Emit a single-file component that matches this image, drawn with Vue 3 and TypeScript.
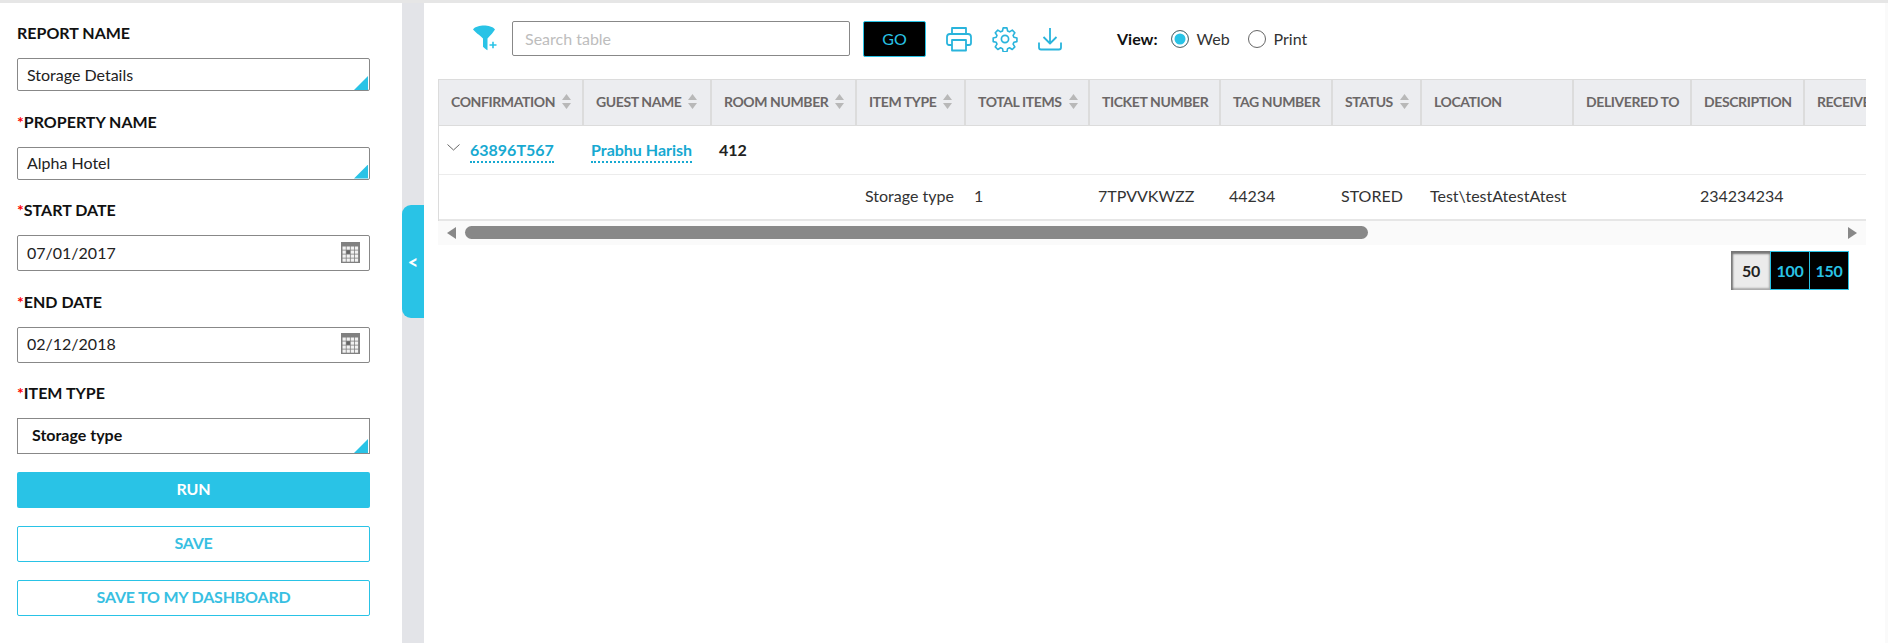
<template>
  <div class="page">
    <aside class="sidebar">
      <form class="report-form" @submit.prevent>
        <template v-for="field in fields" :key="field.label">
          <label class="field-label">
            <span v-if="field.required" class="req">*</span>{{ field.label }}
          </label>
          <div class="field" :class="field.kind">
            <span class="field-value">{{ field.value }}</span>
            <svg v-if="field.kind === 'date'" class="cal" viewBox="0 0 19 21" width="19" height="21">
              <rect width="19" height="21" fill="#808080" />
              <g>
                <template v-for="r in 4" :key="r">
                  <rect
                    v-for="c in 4"
                    :key="c"
                    :x="1.5 + (c - 1) * 4.1"
                    :y="4.5 + (r - 1) * 4"
                    width="3.3"
                    height="3.2"
                    :fill="r === 2 && c === 2 ? '#666' : '#f2f2f2'"
                  />
                </template>
              </g>
            </svg>
          </div>
        </template>
        <button class="btn run" type="button">RUN</button>
        <button class="btn outline" type="button">SAVE</button>
        <button class="btn outline" type="button">SAVE TO MY DASHBOARD</button>
      </form>
    </aside>

    <div class="gutter">
      <button class="collapse" type="button">&lt;</button>
    </div>

    <main class="content">
      <div class="toolbar">
        <svg class="filter-icon" viewBox="0 0 25 28" width="25" height="28">
          <path d="M1 4.500C3 1.500 8 .5 12 .5s9 1 11 4c-1.200 2-4.500 6-7.500 9v11.800c-1-.4-3.400-2.200-4.500-3.500V13.500C8 10.500 2.500 6.500 1 4.500Z" fill="#29c3e6" />
          <path d="M17.500 20h7M21 16.800v6.500" stroke="#29c3e6" stroke-width="1.600" />
        </svg>
        <input class="search" type="text" placeholder="Search table" />
        <button class="go" type="button">GO</button>
        <div class="tools">
          <svg viewBox="0 0 26 26" width="26" height="26" fill="none" stroke="#29b4dc" stroke-width="1.800" stroke-linejoin="round">
            <path d="M6 8V2h14v6" />
            <path d="M6 19H3a2 2 0 0 1-2-2v-6a3 3 0 0 1 3-3h18a3 3 0 0 1 3 3v6a2 2 0 0 1-2 2h-3" />
            <rect x="6" y="14" width="14" height="10.500" />
          </svg>
          <svg viewBox="0 0 26 26" width="26" height="26" fill="none" stroke="#29b4dc" stroke-width="1.700" stroke-linejoin="round">
            <circle cx="13" cy="13" r="3.600" />
            <path d="M11 1.500h4l.7 3.300 2 .9 2.900-1.800 2.700 2.800-1.800 2.800.8 2 3.200.7v3.800l-3.200.7-.8 2 1.800 2.800-2.700 2.800-2.900-1.800-2 .9-.7 3.300h-4l-.7-3.300-2-.9-2.900 1.800-2.700-2.800 1.800-2.800-.8-2-3.200-.7v-3.800l3.200-.7.800-2-1.800-2.800 2.700-2.800 2.900 1.800 2-.9Z" transform="translate(.7 .4) scale(.95)" />
          </svg>
          <svg viewBox="0 0 24 24" width="24" height="24" fill="none" stroke="#29b4dc" stroke-width="1.800" stroke-linejoin="round">
            <path d="M12 1v15M5.500 10l6.500 6.500 6.500-6.500" />
            <path d="M1 15.500v5a2 2 0 0 0 2 2h18a2 2 0 0 0 2-2v-5" />
          </svg>
        </div>
        <div class="view">
          <strong>View:</strong>
          <label class="radio"><input type="radio" name="view" checked />Web</label>
          <label class="radio"><input type="radio" name="view" />Print</label>
        </div>
      </div>

      <div class="table-wrap">
        <table class="grid">
          <colgroup>
            <col v-for="col in columns" :key="col.title" :style="{ width: col.width + 'px' }" />
          </colgroup>
          <thead>
            <tr>
              <th v-for="col in columns" :key="col.title">
                <span class="th-inner">
                  {{ col.title }}
                  <svg v-if="col.sort" class="sort" viewBox="0 0 9 15" width="9" height="15">
                    <path d="M4.500 0 9 6H0Z M0 9h9l-4.500 6Z" fill="#b8b8b8" />
                  </svg>
                </span>
              </th>
            </tr>
          </thead>
          <tbody>
            <tr class="group-row">
              <td class="first">
                <svg class="chev" viewBox="0 0 13 7" width="13" height="7" fill="none" stroke="#666" stroke-width="1">
                  <path d="M.5.5l6 5.500 6-5.500" />
                </svg>
                <a class="link">63896T567</a>
              </td>
              <td><a class="link">Prabhu Harish</a></td>
              <td class="room">412</td>
              <td :colspan="columns.length - 3"></td>
            </tr>
            <tr class="detail-row">
              <td v-for="(cell, i) in detailCells" :key="i">{{ cell }}</td>
            </tr>
          </tbody>
        </table>
      </div>
      <div class="hscroll">
        <span class="arrow left"></span>
        <div class="track"><div class="thumb"></div></div>
        <span class="arrow right"></span>
      </div>

      <div class="pager">
        <button v-for="size in pageSizes" :key="size" type="button" :class="{ active: size === pageSize }">{{ size }}</button>
      </div>
    </main>
    <div class="edge"></div>
  </div>
</template>

<script setup lang="ts">
import { ref } from 'vue';

interface Field {
  label: string;
  value: string;
  kind: 'select' | 'date' | 'select tall';
  required: boolean;
}

const fields: Field[] = [
  { label: 'REPORT NAME', value: 'Storage Details', kind: 'select', required: false },
  { label: 'PROPERTY NAME', value: 'Alpha Hotel', kind: 'select', required: true },
  { label: 'START DATE', value: '07/01/2017', kind: 'date', required: true },
  { label: 'END DATE', value: '02/12/2018', kind: 'date', required: true },
  { label: 'ITEM TYPE', value: 'Storage type', kind: 'select tall', required: true },
];

const columns = [
  { title: 'CONFIRMATION', width: 145, sort: true },
  { title: 'GUEST NAME', width: 128, sort: true },
  { title: 'ROOM NUMBER', width: 145, sort: true },
  { title: 'ITEM TYPE', width: 109, sort: true },
  { title: 'TOTAL ITEMS', width: 124, sort: true },
  { title: 'TICKET NUMBER', width: 131, sort: false },
  { title: 'TAG NUMBER', width: 112, sort: false },
  { title: 'STATUS', width: 89, sort: true },
  { title: 'LOCATION', width: 152, sort: false },
  { title: 'DELIVERED TO', width: 118, sort: false },
  { title: 'DESCRIPTION', width: 113, sort: false },
  { title: 'RECEIVED BY', width: 130, sort: false },
];

const detailCells = ['', '', '', 'Storage type', '1', '7TPVVKWZZ', '44234', 'STORED', 'Test\\testAtestAtest', '', '234234234', ''];

const pageSizes = [50, 100, 150];
const pageSize = ref(50);
</script>

<style>
html, body {
  background: #fff;
}
</style>

<style scoped>
.page {
  display: flex;
  width: 1888px;
  height: 643px;
  box-sizing: border-box;
  border-top: 3px solid #e6e6e6;
  overflow: hidden;
  font-family: Lato, "Open Sans", sans-serif;
  color: #222;
}
.sidebar {
  width: 402px;
  flex: none;
  box-sizing: border-box;
  padding: 0 32px 0 17px;
}
.report-form {
  display: flex;
  flex-direction: column;
}
.field-label {
  display: block;
  height: 20px;
  line-height: 20px;
  margin-top: 20.5px;
  margin-bottom: 15px;
  font-size: 16px;
  font-weight: 700;
  color: #111;
}
.field-label:first-child {
  margin-top: 20px;
}
.req {
  color: #f00;
}
.field {
  position: relative;
  box-sizing: border-box;
  height: 33px;
  border: 1px solid #888;
  border-radius: 2px;
  padding: 0 9px 1px;
  display: flex;
  align-items: center;
  justify-content: space-between;
  font-size: 16px;
  color: #222;
}
.field.select::after {
  content: "";
  position: absolute;
  right: 1px;
  bottom: 0;
  width: 14px;
  height: 14px;
  background: #29c3e6;
  clip-path: polygon(100% 0, 100% 100%, 0 100%);
}
.field.date {
  height: 36px;
  padding-bottom: 2px;
}
.field.tall {
  height: 36px;
  border-radius: 0;
  padding-left: 14px;
  padding-bottom: 3px;
  font-weight: 700;
  color: #111;
}
.btn {
  height: 36px;
  margin-top: 18px;
  border-radius: 2px;
  padding: 0 0 3px;
  font-family: inherit;
  font-size: 16px;
  font-weight: 700;
  letter-spacing: -0.2px;
  cursor: pointer;
}
.run {
  background: #29c3e6;
  border: none;
  color: #fff;
}
.outline {
  background: #fff;
  border: 1px solid #29c3e6;
  color: #38bfe2;
}
.gutter {
  position: relative;
  width: 22px;
  flex: none;
  background: #e3e4e8;
}
.collapse {
  position: absolute;
  top: 202px;
  left: 0;
  width: 22px;
  height: 113px;
  border: none;
  padding: 0;
  border-radius: 9px 0 0 9px;
  background: #29c3e6;
  color: #fff;
  font-family: inherit;
  font-size: 18px;
  font-weight: 900;
}
.content {
  flex: 1;
  min-width: 0;
  padding: 0 19px 0 14px;
}
.toolbar {
  display: flex;
  align-items: center;
  height: 76px;
  padding-bottom: 5px;
  box-sizing: border-box;
  padding-left: 34px;
}
.filter-icon {
  flex: none;
}
.search {
  width: 338px;
  height: 35px;
  box-sizing: border-box;
  margin-left: 15px;
  border: 1px solid #888;
  border-radius: 2px;
  padding: 0 12px 1px;
  font-family: inherit;
  font-size: 16px;
  outline: none;
}
.search::placeholder {
  color: #bdbdbd;
}
.go {
  width: 63px;
  height: 36px;
  margin-left: 13px;
  background: #000;
  border: 1px solid #29c3e6;
  border-radius: 2px;
  color: #29c3e6;
  font-family: inherit;
  font-size: 16px;
}
.tools {
  display: flex;
  align-items: center;
  gap: 20px;
  margin-left: 20px;
}
.view {
  display: flex;
  align-items: center;
  margin-left: 55px;
  font-size: 16px;
}
.view strong {
  color: #111;
  margin-right: 13px;
}
.radio {
  display: flex;
  align-items: center;
  gap: 8px;
  margin-right: 10px;
  width: 67px;
  color: #333;
}
.radio input {
  appearance: none;
  width: 18px;
  height: 18px;
  margin: 0;
  border: 1.5px solid #666;
  border-radius: 50%;
  background: #fff;
}
.radio input:checked {
  background: #29c3e6;
  box-shadow: inset 0 0 0 2.5px #fff;
}
.table-wrap {
  overflow: hidden;
  width: 1428px;
  border-left: 1px solid #dcdcdc;
  box-sizing: border-box;
}
.grid {
  border-collapse: collapse;
  table-layout: fixed;
  width: 1496px;
  font-size: 16px;
  margin-left: -1px;
}
.grid th {
  height: 46px;
  box-sizing: border-box;
  background: #ecedf0;
  border-top: 1px solid #dcdcdc;
  border-bottom: 1px solid #dcdcdc;
  border-right: 2px solid #dcdcdc;
  padding: 0 0 2px 12px;
  text-align: left;
  font-size: 14px;
  font-weight: 700;
  letter-spacing: -0.4px;
  color: #6b6767;
  white-space: nowrap;
  overflow: hidden;
}
.grid th:first-child {
  padding-left: 13px;
}
.th-inner {
  display: inline-flex;
  align-items: center;
  gap: 7px;
}
.sort {
  flex: none;
}
.group-row td {
  height: 49px;
  box-sizing: border-box;
  padding: 0 0 2px 8px;
  border-bottom: 1px solid #ececec;
  white-space: nowrap;
}
.group-row .first {
  position: relative;
  padding-left: 32px;
}
.chev {
  position: absolute;
  left: 9px;
  top: 18px;
}
.link {
  font-weight: 700;
  color: #17a9d1;
  border-bottom: 2px dotted #17a9d1;
  padding-bottom: 2px;
}
.room {
  font-weight: 700;
  color: #222;
}
.detail-row td {
  height: 45px;
  box-sizing: border-box;
  padding: 0 0 3px 9px;
  border-bottom: 2px solid #e6e6e6;
  color: #333;
  white-space: nowrap;
}
.hscroll {
  display: flex;
  align-items: center;
  width: 1428px;
  height: 24px;
  background: #fafafa;
}
.arrow {
  width: 0;
  height: 0;
  border-top: 6px solid transparent;
  border-bottom: 6px solid transparent;
}
.arrow.left {
  margin-left: 9px;
  border-right: 9px solid #888;
}
.arrow.right {
  margin-right: 9px;
  border-left: 9px solid #888;
}
.track {
  flex: 1;
  padding: 0 0 0 9px;
}
.thumb {
  width: 903px;
  height: 13px;
  border-radius: 7px;
  background: #888;
}
.pager {
  display: flex;
  justify-content: flex-end;
  width: 1411px;
  margin-top: 6px;
}
.pager button {
  width: 40px;
  height: 39px;
  box-sizing: border-box;
  padding: 0;
  margin-left: -1px;
  background: #000;
  border: 1px solid #29c3e6;
  color: #29c3e6;
  font-family: inherit;
  font-size: 16px;
  font-weight: 700;
  letter-spacing: -0.3px;
}
.pager button.active {
  background: #ebebeb;
  border: none;
  color: #222;
  box-shadow: inset 2px 3px 2px #777, inset -2px -2px 2px #aaa;
}
.edge {
  width: 3px;
  flex: none;
  background: #fafafa;
}
</style>
